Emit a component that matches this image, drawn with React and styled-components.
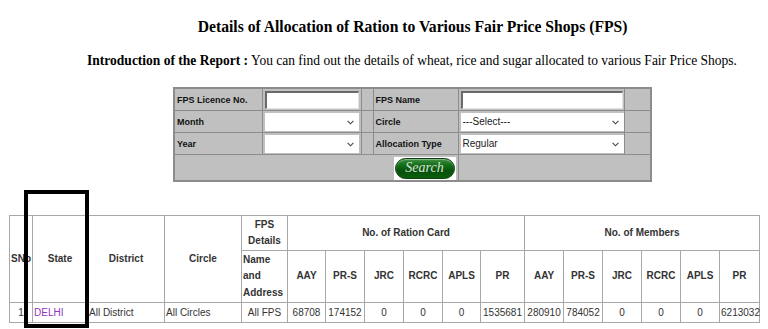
import React from 'react';
import styled, { createGlobalStyle } from 'styled-components';

const Global = createGlobalStyle`
  html, body { margin: 0; padding: 0; background: #fff; }
  body {
    font-family: "Liberation Serif", "Times New Roman", serif;
    width: 768px;
    height: 329px;
    overflow: hidden;
  }
`;

const Page = styled.div`
  position: relative;
  width: 768px;
  height: 329px;
`;

const Header = styled.div`
  padding-left: 57px;
  display: flex;
  flex-direction: column;
  align-items: center;
`;

const Title = styled.h1`
  margin: 17px 0 0;
  font-size: 17px;
  line-height: 20px;
  font-weight: bold;
  color: #000;
  white-space: nowrap;
  transform: scaleX(0.92);
`;

const Intro = styled.p`
  margin: 14px 0 0;
  font-size: 15px;
  line-height: 18px;
  color: #000;
  white-space: nowrap;
  transform: scaleX(0.9);
  b { font-weight: bold; }
`;

const FormTable = styled.table`
  margin-top: 18px;
  border-collapse: collapse;
  table-layout: fixed;
  width: 479px;
  background: #c0c0c0;
  border: 2px solid #8c8c8c;
`;

const FCell = styled.td`
  border: 1px solid #8c8c8c;
  height: ${p => p.$h || 21}px;
  padding: 0 2px;
  font: bold 9px "Liberation Sans", Arial, sans-serif;
  color: #111;
  text-align: ${p => p.$align || 'left'};
  vertical-align: middle;
`;

const TextInput = styled.input`
  box-sizing: border-box;
  display: block;
  width: ${p => p.$w}px;
  height: 18px;
  margin: 0;
  padding: 0 2px;
  background: #fff;
  border-style: solid;
  border-width: 2px 1px 1px 2px;
  border-color: #6a6a6a #e2e2e2 #e2e2e2 #6a6a6a;
  font: 10px "Liberation Sans", Arial, sans-serif;
`;

const SelectWrap = styled.div`
  position: relative;
  width: ${p => p.$w}px;
  height: 18px;
  background: #fff;
`;

const Select = styled.select`
  appearance: none;
  -webkit-appearance: none;
  box-sizing: border-box;
  width: 100%;
  height: 100%;
  margin: 0;
  padding: 0 14px 0 2px;
  border: none;
  background: transparent;
  font: 10px "Liberation Sans", Arial, sans-serif;
  color: #222;
  outline: none;
`;

const Chevron = styled.svg`
  position: absolute;
  right: 5px;
  top: 7px;
  width: 7px;
  height: 5px;
  pointer-events: none;
`;

const SearchFrame = styled.span`
  display: inline-block;
  background: #fff;
  padding: 1px 1px;
  margin-top: 1px;
  line-height: 0;
`;

const SearchButton = styled.button`
  width: 60px;
  height: 21px;
  border-radius: 11px;
  border: 1px solid #0b3d0b;
  background: linear-gradient(to bottom, #3f8f3f 0%, #16701a 30%, #07500a 65%, #0b600d 100%);
  box-shadow: inset 0 1px 1px rgba(255,255,255,0.4);
  color: #d9e2d9;
  font: italic 14px "Liberation Serif", "Times New Roman", serif;
  padding: 0;
  cursor: pointer;
`;

const DataTable = styled.table`
  margin: 33px 0 0 9px;
  border-collapse: collapse;
  table-layout: fixed;
  width: 750px;
  border: 1px solid #9a9a9a;
  font-family: "Liberation Sans", Arial, sans-serif;
  font-size: 10px;
  color: #333;
`;

const Th = styled.th`
  border: 1px solid #a8a8a8;
  padding: 0 1px;
  font-weight: bold;
  line-height: 16.5px;
  height: ${p => p.$h ? `${p.$h}px` : 'auto'};
  text-align: ${p => p.$align || 'center'};
  vertical-align: middle;
  white-space: ${p => p.$wrap ? 'normal' : 'nowrap'};
  overflow: visible;
`;

const Td = styled.td`
  border: 1px solid #a8a8a8;
  padding: 0 1px;
  height: 19px;
  line-height: 16px;
  text-align: ${p => p.$align || 'center'};
  white-space: nowrap;
  overflow: visible;
`;

const StateLink = styled.a`
  color: #9035c2;
  text-decoration: none;
`;

const Highlight = styled.div`
  position: absolute;
  left: 24px;
  top: 190px;
  width: 65px;
  height: 138px;
  box-sizing: border-box;
  border: 4px solid #000;
  pointer-events: none;
`;

const ChevronIcon = () => (
  <Chevron viewBox="0 0 7 5">
    <path d="M0.6 0.8 L3.5 3.8 L6.4 0.8" fill="none" stroke="#444" strokeWidth="1.1" />
  </Chevron>
);

const DropDown = ({ w, value, options = [] }) => (
  <SelectWrap $w={w}>
    <Select defaultValue={value}>
      {options.map(o => <option key={o}>{o}</option>)}
    </Select>
    <ChevronIcon />
  </SelectWrap>
);

const colWidths = [23, 55, 77, 77, 46, 38, 39, 39, 39, 38, 44, 39, 39, 39, 39, 39, 40];
const subCols = ['AAY', 'PR-S', 'JRC', 'RCRC', 'APLS', 'PR'];
const cardVals = ['68708', '174152', '0', '0', '0', '1535681'];
const memberVals = ['280910', '784052', '0', '0', '0', '6213032'];

export default function App() {
  return (
    <Page>
      <Global />
      <Header>
        <Title>Details of Allocation of Ration to Various Fair Price Shops (FPS)</Title>
        <Intro>
          <b>Introduction of the Report :</b> You can find out the details of wheat, rice and sugar allocated to various Fair Price Shops.
        </Intro>
        <FormTable>
          <colgroup>
            <col style={{ width: 88 }} />
            <col style={{ width: 99 }} />
            <col style={{ width: 12 }} />
            <col style={{ width: 85 }} />
            <col style={{ width: 166 }} />
            <col style={{ width: 27 }} />
          </colgroup>
          <tbody>
            <tr>
              <FCell>FPS Licence No.</FCell>
              <FCell><TextInput $w={94} /></FCell>
              <FCell />
              <FCell>FPS Name</FCell>
              <FCell><TextInput $w={162} /></FCell>
              <FCell />
            </tr>
            <tr>
              <FCell>Month</FCell>
              <FCell><DropDown w={94} value="" options={['']} /></FCell>
              <FCell />
              <FCell>Circle</FCell>
              <FCell><DropDown w={163} value="---Select---" options={['---Select---']} /></FCell>
              <FCell />
            </tr>
            <tr>
              <FCell>Year</FCell>
              <FCell><DropDown w={94} value="" options={['']} /></FCell>
              <FCell />
              <FCell>Allocation Type</FCell>
              <FCell><DropDown w={163} value="Regular" options={['Regular']} /></FCell>
              <FCell />
            </tr>
            <tr>
              <FCell colSpan={4} $align="right" $h={25}>
                <SearchFrame><SearchButton type="button">Search</SearchButton></SearchFrame>
              </FCell>
              <FCell colSpan={2} />
            </tr>
          </tbody>
        </FormTable>
      </Header>

      <DataTable>
        <colgroup>
          {colWidths.map((w, i) => <col key={i} style={{ width: w }} />)}
        </colgroup>
        <thead>
          <tr>
            <Th rowSpan={2} $align="left">SNo</Th>
            <Th rowSpan={2}>State</Th>
            <Th rowSpan={2}>District</Th>
            <Th rowSpan={2}>Circle</Th>
            <Th $h={34} $wrap>FPS<br />Details</Th>
            <Th colSpan={6}>No. of Ration Card</Th>
            <Th colSpan={6}>No. of Members</Th>
          </tr>
          <tr>
            <Th $h={51} $align="left" $wrap>Name<br />and<br />Address</Th>
            {subCols.map((c, i) => <Th key={'c' + i}>{c}</Th>)}
            {subCols.map((c, i) => <Th key={'m' + i}>{c}</Th>)}
          </tr>
        </thead>
        <tbody>
          <tr>
            <Td>1</Td>
            <Td $align="left"><StateLink href="#">DELHI</StateLink></Td>
            <Td $align="left">All District</Td>
            <Td $align="left">All Circles</Td>
            <Td>All FPS</Td>
            {cardVals.map((v, i) => <Td key={'cv' + i}>{v}</Td>)}
            {memberVals.map((v, i) => <Td key={'mv' + i}>{v}</Td>)}
          </tr>
        </tbody>
      </DataTable>
      <Highlight />
    </Page>
  );
}
